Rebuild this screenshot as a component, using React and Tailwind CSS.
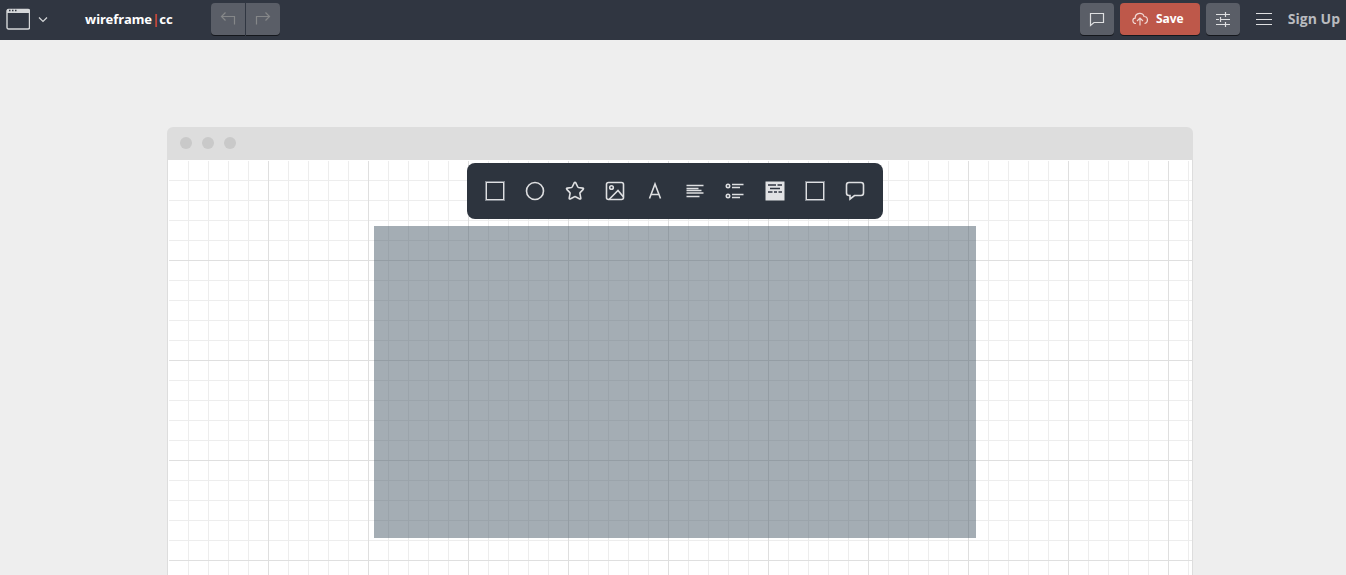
import { useState } from "react";

const square = (
  <>
    <rect x="1" y="1" width="18" height="18" stroke="#7d838b" strokeWidth="2" />
    <rect x="1.5" y="1.5" width="17" height="17" strokeWidth="1" />
  </>
);

const tools = [
  { name: "Rectangle", icon: square },
  { name: "Ellipse", icon: <circle cx="10" cy="10" r="8.5" /> },
  {
    name: "Star",
    icon: (
      <path d="M9.2 1.8q.8-1.1 1.6 0l2 4.2q.2.4.7.5l4.2.6q1.3.2.5 1.3l-3.1 3.2q-.3.3-.2.8l.9 4.7q.1 1.200-1 .8l-4.300-2.200q-.5-.3-1 0l-4.300 2.200q-1.100.4-1-.8l.9-4.700q.1-.5-.2-.8L1.800 8.400q-.8-1.100.5-1.300l4.200-.6q.5-.1.700-.5z" />
    ),
  },
  {
    name: "Image",
    icon: (
      <>
        <rect x="1.5" y="1.5" width="17" height="17" rx="2" />
        <circle cx="6.5" cy="6.5" r="1.8" />
        <path d="M4 18.5l9-9 5.500 6.500" />
      </>
    ),
  },
  { name: "Heading", icon: <path d="M4.5 17.5L10 3l5.5 14.5M6 13.500h8" /> },
  {
    name: "Paragraph",
    icon: <path d="M1.5 4.5h17M1.5 7.5h12M1.5 9.500h15M1.5 12h17M1.5 15.500h13" />,
  },
  {
    name: "List",
    icon: (
      <>
        <circle cx="3" cy="5" r="1.7" />
        <circle cx="3" cy="15" r="1.7" />
        <path d="M7 3.500h11.500M7 6.500h8M7 13.500h11.500M7 16.500h8" />
      </>
    ),
  },
  {
    name: "Annotation",
    icon: (
      <>
        <path d="M.5.5h19v19H.5z" fill="#e1e2e4" stroke="none" />
        <path d="M3 4h8M12.500 4h4.500M5 7.500h10M3 11h4.500M9 11h3M13.500 11H17" stroke="#2f3540" strokeWidth="1.6" />
      </>
    ),
  },
  { name: "Box", icon: square },
  {
    name: "Callout",
    icon: (
      <path d="M4 1.500h12q2.500 0 2.500 2.500v8q0 2.500-2.500 2.500H9.500L5 18v-3.500H4q-2.500 0-2.500-2.500V4q0-2.500 2.500-2.500z" />
    ),
  },
];

const grey = "flex h-8 items-center justify-center bg-[#5a5e67] shadow-[0_1px_0_#14171c]";

function Header() {
  return (
    <header className="flex h-10 items-center justify-between bg-[#303641] pb-0.5">
      <div className="flex items-center">
        <button aria-label="Device" className="flex items-center gap-2 pl-1.5">
          <svg width="24" height="22" viewBox="0 0 24 22" fill="none">
            <rect x="1" y="1.5" width="22.5" height="19.5" rx="1.5" stroke="#d5d7d9" strokeWidth="1.4" />
            <path d="M1 1.500h22v3.500H1z" fill="#d5d7d9" />
            <path d="M3 2.500h1.500M6 2.500h1.500M9 2.500h1.500" stroke="#303641" strokeWidth="1.5" />
          </svg>
          <svg width="10" height="10" viewBox="0 0 10 10" fill="none" stroke="#d5d7d9" strokeWidth="1.2">
            <path d="M1 3.500l4 4 4-4" />
          </svg>
        </button>
        <a href="#home" className="ml-[37px] w-[90px] font-['Noto_Sans','Open_Sans',sans-serif] text-[13px] leading-5 font-bold text-white">
          wireframe<span className="font-semibold text-[#e8503a]">|</span>cc
        </a>
        <div className="ml-9 flex gap-px">
          <button aria-label="Undo" className={`${grey} w-[34px] rounded-l`}>
            <svg width="16" height="16" viewBox="0 0 16 16" fill="none" stroke="#858789" strokeWidth="1.2">
              <path d="M5.500 1.500l-4 4 4 4M1.500 5.500h13v8" />
            </svg>
          </button>
          <button aria-label="Redo" className={`${grey} w-[34px] rounded-r`}>
            <svg width="16" height="16" viewBox="0 0 16 16" fill="none" stroke="#858789" strokeWidth="1.2">
              <path d="M10.500 1.500l4 4-4 4M14.500 5.500h-13v8" />
            </svg>
          </button>
        </div>
      </div>

      <div className="flex items-center gap-1.5 pr-1.5">
        <button aria-label="Comments" className={`${grey} w-[34px] rounded`}>
          <svg width="16" height="16" viewBox="0 0 16 16" fill="none" stroke="#dedfe1" strokeWidth="1.2">
            <path d="M1.500 2.500h13v9H5l-3.500 3z" />
          </svg>
        </button>
        <button className="flex h-8 w-20 items-center justify-center gap-2 rounded bg-[#be584a] pr-1 text-xs font-bold text-white shadow-[0_1px_0_#14171c]">
          <svg width="16" height="16" viewBox="0 0 16 16" fill="none" stroke="#f0d8d4" strokeWidth="1.2">
            <path d="M4 12.500c-4 0-4-5-.8-5.300C3 1.200 11.500.8 12 5.500c4.500 0 4.500 6.500.5 7M8 14.500V7M5 10l3-3 3 3" />
          </svg>
          Save
        </button>
        <button aria-label="Settings" className={`${grey} w-[34px] rounded`}>
          <svg width="16" height="16" viewBox="0 0 16 16" fill="none" stroke="#dedfe1" strokeWidth="1.2">
            <path d="M1 3.500h14M1 8.500h3M6 8.500h9M1 13.500h14M10.500 1v5M5.500 6v5M10.500 11v5" />
          </svg>
        </button>
        <button aria-label="Menu" className="flex w-9 justify-center">
          <svg width="16" height="14" viewBox="0 0 16 14" stroke="#dedfe1" strokeWidth="1.2">
            <path d="M0 1.500h16M0 7.500h16M0 12.500h16" />
          </svg>
        </button>
        <a href="#signup" className="text-sm font-bold text-[#b9bbbf]">Sign Up</a>
      </div>
    </header>
  );
}

export default function App() {
  const [active, setActive] = useState(null);

  return (
    <div className="flex min-h-screen flex-col bg-[#eeeeee] font-['Open_Sans',sans-serif]">
      <Header />
      <main className="flex flex-1 flex-col pt-[87px] pl-3.5">
        <div className="mx-auto flex w-full max-w-[1026px] flex-1 flex-col">
          <div className="flex h-[33px] items-center gap-2.5 rounded-t-md bg-[#dddddd] px-[13px] pb-px">
            <span className="size-3 rounded-full bg-[#c9c9c9]" />
            <span className="size-3 rounded-full bg-[#c9c9c9]" />
            <span className="size-3 rounded-full bg-[#c9c9c9]" />
          </div>
          <div className="flex flex-1 flex-col border-x border-[#dddddd]">
            {/* 20px grid with a heavier line every 100px */}
            <div className="relative flex-1 border-t border-l border-white bg-white bg-[linear-gradient(#dfdfdf_1px,transparent_1px),linear-gradient(90deg,#dfdfdf_1px,transparent_1px),linear-gradient(#ededed_1px,transparent_1px),linear-gradient(90deg,#ededed_1px,transparent_1px)] bg-[size:100px_100px,100px_100px,20px_20px,20px_20px] bg-[position:-1px_-1px]">
              <div className="absolute top-[65px] left-[205px] h-[312px] w-[602px] bg-[#4a5b6a]/50" />
              <div className="absolute top-[2px] left-[298px] flex h-14 items-center rounded-lg bg-[#2d343e] px-2">
                {tools.map((tool) => (
                  <button
                    key={tool.name}
                    aria-label={tool.name}
                    aria-pressed={active === tool.name}
                    onClick={() => setActive(tool.name)}
                    className="flex size-10 items-center justify-center"
                  >
                    <svg width="20" height="20" viewBox="0 0 20 20" fill="none" stroke="#dedfe1" strokeWidth="1.6">
                      {tool.icon}
                    </svg>
                  </button>
                ))}
              </div>
            </div>
          </div>
        </div>
      </main>
    </div>
  );
}
